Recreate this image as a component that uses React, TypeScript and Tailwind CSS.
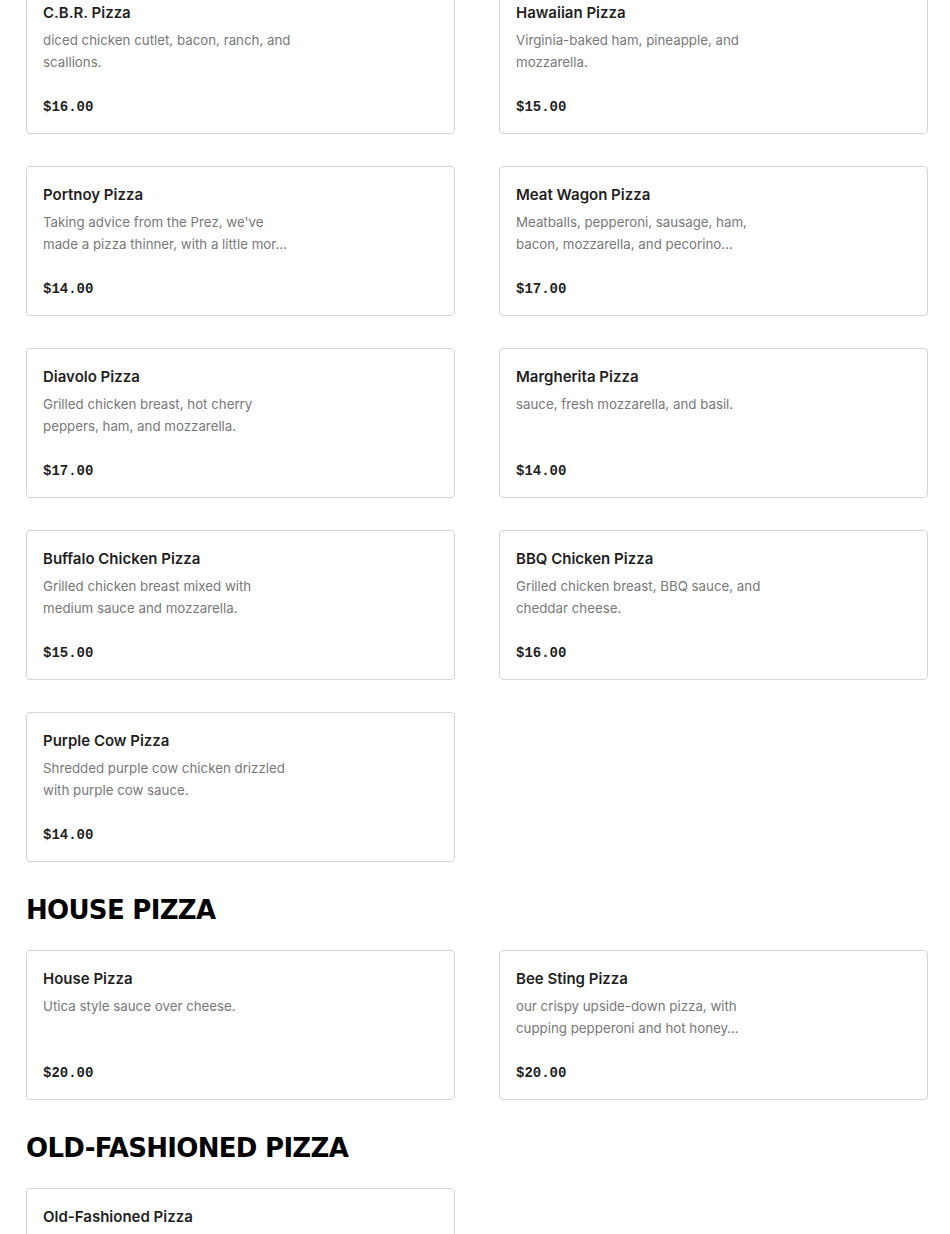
import React from "react";

type Item = { name: string; lines: string[]; price: string };

const pizzas: Item[] = [
  { name: "C.B.R. Pizza", lines: ["diced chicken cutlet, bacon, ranch, and", "scallions."], price: "$16.00" },
  { name: "Hawaiian Pizza", lines: ["Virginia-baked ham, pineapple, and", "mozzarella."], price: "$15.00" },
  { name: "Portnoy Pizza", lines: ["Taking advice from the Prez, we've", "made a pizza thinner, with a little mor…"], price: "$14.00" },
  { name: "Meat Wagon Pizza", lines: ["Meatballs, pepperoni, sausage, ham,", "bacon, mozzarella, and pecorino…"], price: "$17.00" },
  { name: "Diavolo Pizza", lines: ["Grilled chicken breast, hot cherry", "peppers, ham, and mozzarella."], price: "$17.00" },
  { name: "Margherita Pizza", lines: ["sauce, fresh mozzarella, and basil."], price: "$14.00" },
  { name: "Buffalo Chicken Pizza", lines: ["Grilled chicken breast mixed with", "medium sauce and mozzarella."], price: "$15.00" },
  { name: "BBQ Chicken Pizza", lines: ["Grilled chicken breast, BBQ sauce, and", "cheddar cheese."], price: "$16.00" },
  { name: "Purple Cow Pizza", lines: ["Shredded purple cow chicken drizzled", "with purple cow sauce."], price: "$14.00" },
];

const house: Item[] = [
  { name: "House Pizza", lines: ["Utica style sauce over cheese."], price: "$20.00" },
  { name: "Bee Sting Pizza", lines: ["our crispy upside-down pizza, with", "cupping pepperoni and hot honey…"], price: "$20.00" },
];

const old: Item[] = [
  { name: "Old-Fashioned Pizza", lines: ["Utica style sauce over cheese."], price: "$20.00" },
];

function Card({ item }: { item: Item }) {
  return (
    <div className="h-[150px] rounded-[4px] border border-[#d4d4d4] bg-white px-4 pt-[18px] pb-[16px] flex flex-col">
      <div className="text-[15px] leading-[20px] font-semibold text-[#1f1f1f] font-['Inter',sans-serif]">{item.name}</div>
      <div className="mt-[6px] h-[44px] text-[13.3px] leading-[22px] text-[#787878] font-['Inter',sans-serif]">
        {item.lines.map((l, i) => (
          <div key={i} className="whitespace-nowrap">{l}</div>
        ))}
      </div>
      <div className="mt-[24px] text-[14px] leading-[20px] font-bold text-[#1f1f1f] font-['Liberation_Mono',monospace]">{item.price}</div>
    </div>
  );
}

function Heading({ children }: { children: React.ReactNode }) {
  return (
    <h2 className="mt-[32px] mb-[24px] text-[26px] leading-[32px] font-bold tracking-[-0.7px] text-black font-['DejaVu_Sans',sans-serif]">
      {children}
    </h2>
  );
}

export default function App() {
  return (
    <div className="bg-white min-h-[1234px] overflow-hidden">
      <div className="ml-[26px] w-[902px] mt-[-16px]">
        <div className="grid grid-cols-2 gap-x-[44px] gap-y-[32px]">
          {pizzas.map((p) => (
            <Card key={p.name} item={p} />
          ))}
        </div>
        <Heading>HOUSE PIZZA</Heading>
        <div className="grid grid-cols-2 gap-x-[44px] gap-y-[32px]">
          {house.map((p) => (
            <Card key={p.name} item={p} />
          ))}
        </div>
        <Heading>OLD-FASHIONED PIZZA</Heading>
        <div className="grid grid-cols-2 gap-x-[44px] gap-y-[32px]">
          {old.map((p) => (
            <Card key={p.name} item={p} />
          ))}
        </div>
      </div>
    </div>
  );
}
